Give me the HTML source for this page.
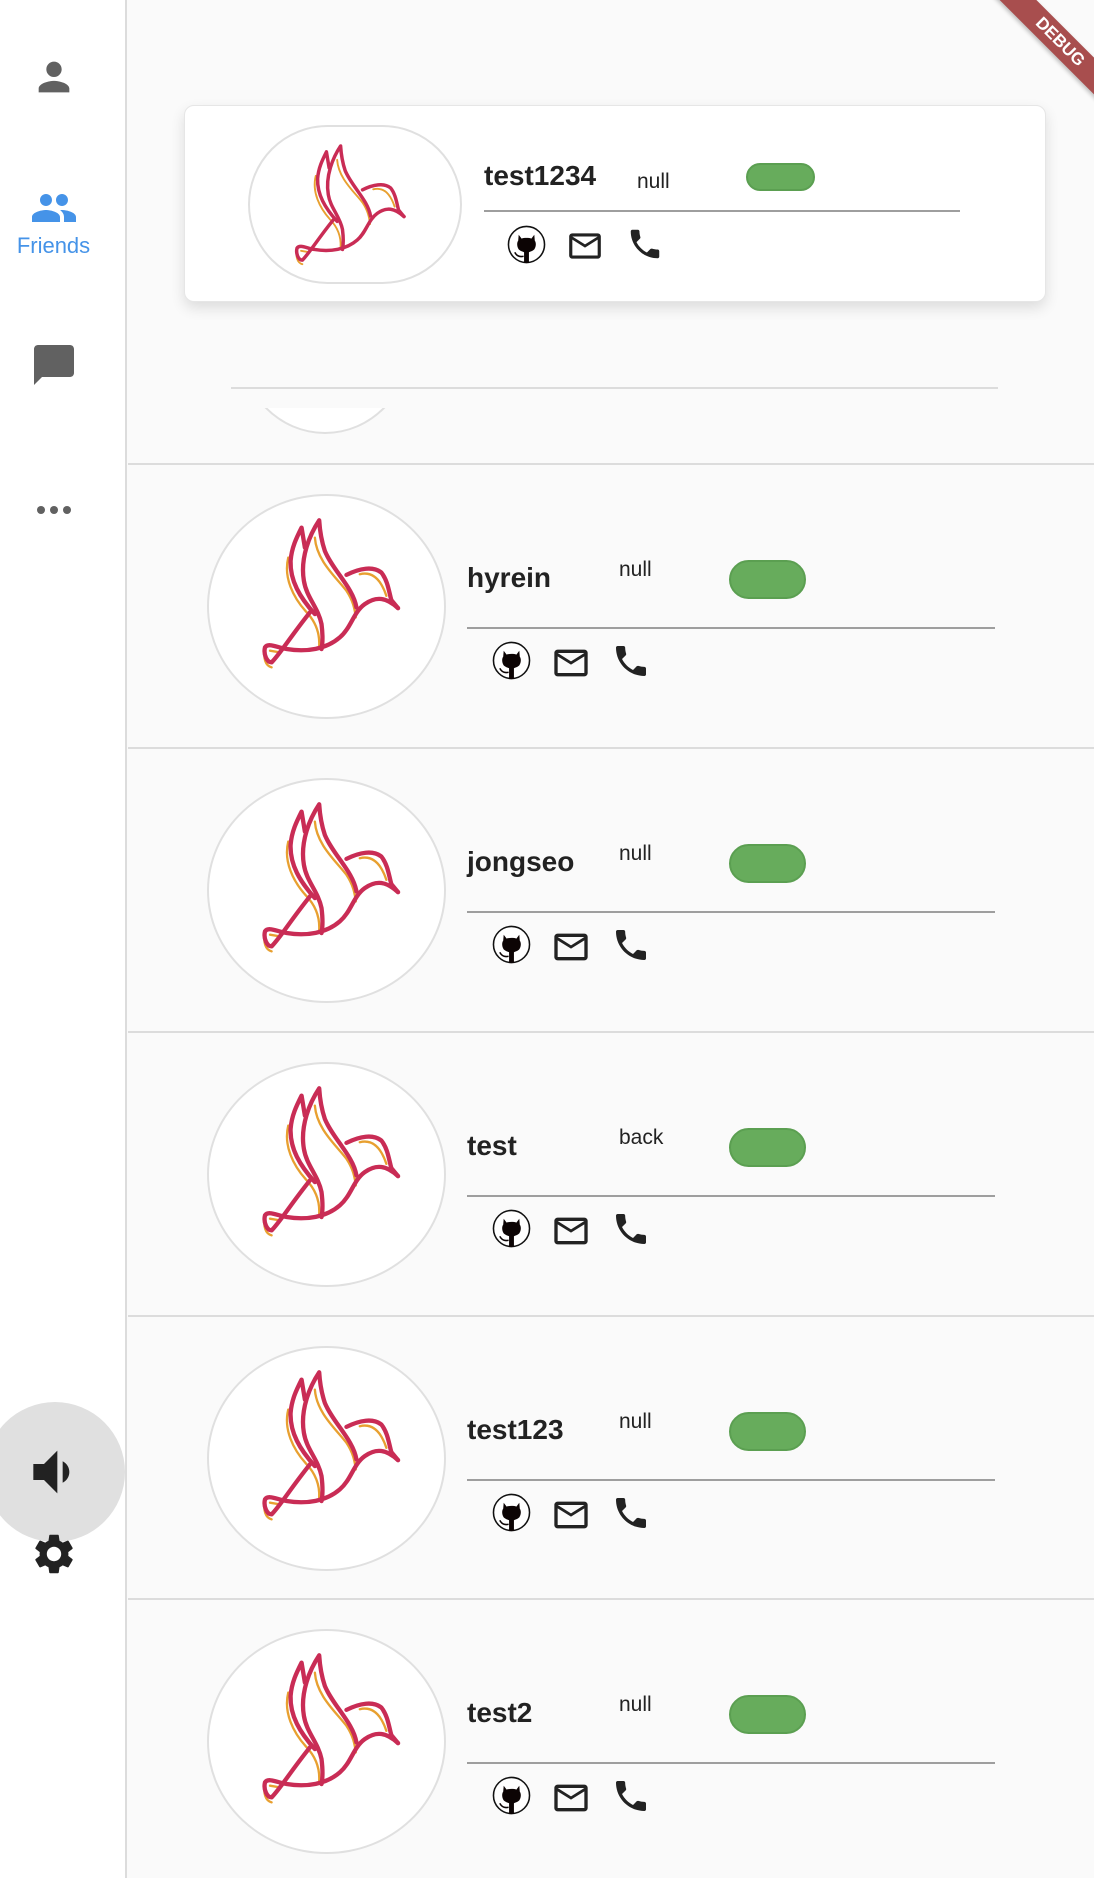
<!DOCTYPE html>
<html><head><meta charset="utf-8">
<style>
*{margin:0;padding:0;box-sizing:border-box}
html,body{width:1094px;height:1878px;overflow:hidden;background:#fafafa;font-family:"Liberation Sans",Roboto,sans-serif;position:relative}
.side{position:absolute;left:0;top:0;width:127px;height:1878px;background:#fff;border-right:2px solid #dcdcdc}
.ic{position:absolute}
.row{position:absolute;left:128px;width:966px;height:284px;border-top:2px solid #dcdcdc;background:#fafafa}
.av{position:absolute;left:79px;top:29px;width:239px;height:225px;border-radius:50%;background:#fff;border:2px solid #e0e0e0}
.name{position:absolute;left:339px;top:97px;font-size:28px;font-weight:bold;color:#222;letter-spacing:0}
.st{position:absolute;left:491px;top:93px;font-size:21px;color:#222}
.tg{position:absolute;left:601px;top:95px;width:77px;height:39px;border-radius:20px;background:#67ac5c;border:2px solid #5b9f51}
.ln{position:absolute;left:339px;top:162px;width:528px;height:2px;background:#9e9e9e}
.gh{position:absolute;left:364px;top:176px;width:39px;height:39px}
.ml{position:absolute;left:423px;top:178px;width:40px;height:40px}
.ph{position:absolute;left:483px;top:176px;width:40px;height:40px}
</style></head><body>
<svg width="0" height="0" style="position:absolute">
<defs>
<symbol id="bird" viewBox="180 100 430 470">
<g fill="none" stroke-linecap="round" stroke-linejoin="round">
<g stroke="#e8a030" stroke-width="7">
<path d="M265,230 C250,290 280,350 318,392 C345,420 360,455 358,495"/>
<path d="M345,170 C350,240 410,290 440,330 C460,360 465,385 468,410"/>
<path d="M480,280 C520,270 545,300 560,345"/>
<path d="M195,510 C190,530 195,555 215,560"/>
<path d="M210,510 L240,515"/>
</g>
<g stroke="#c92c55" stroke-width="13">
<path d="M595,382 C560,350 530,345 495,370 C460,395 455,440 420,470 C380,505 320,515 260,505 C230,500 205,485 195,500 C190,520 200,545 215,545 C240,520 270,470 330,395"/>
<path d="M470,380 C460,320 400,270 375,210 C365,180 360,150 358,118 C330,160 300,230 312,300 C320,350 355,380 365,430 C370,470 368,490 365,505"/>
<path d="M345,400 C300,350 270,300 272,240 C275,200 290,170 305,140 L315,200"/>
<path d="M440,282 C480,262 520,255 545,275 C565,300 568,335 575,358 L595,382"/>
</g></g>
</symbol>
<symbol id="gh" viewBox="0 0 40 40">
<circle cx="20" cy="20" r="18.5" fill="#fff" stroke="#111" stroke-width="1.6"/>
<path d="M12 10 L15 14 C17 13 23 13 25 14 L28 10 L28.5 16 C30 18 30 22 28 25 C26 27 23 27.5 22.5 28 L22.5 39 L17.5 39 L17.5 28 C17 27.5 14 27 12 25 C10 22 10 18 11.5 16 Z" fill="#0c0404"/>
<path d="M8 28 C10 32 13 33 17 32" fill="none" stroke="#0c0404" stroke-width="1.6"/>
</symbol>
<symbol id="ml" viewBox="0 0 24 24"><path fill="#222" d="M20 4H4c-1.1 0-1.99.9-1.99 2L2 18c0 1.1.9 2 2 2h16c1.1 0 2-.9 2-2V6c0-1.1-.9-2-2-2zm0 14H4V8l8 5 8-5v10zm-8-7L4 6h16l-8 5z"/></symbol>
<symbol id="ph" viewBox="0 0 24 24"><path fill="#222" d="M6.62 10.79c1.44 2.83 3.76 5.14 6.590 6.59l2.2-2.2c.27-.27.67-.36 1.02-.24 1.12.37 2.33.57 3.57.57.55 0 1 .45 1 1V20c0 .55-.45 1-1 1-9.39 0-17-7.610-17-17 0-.55.45-1 1-1h3.5c.55 0 1 .45 1 1 0 1.25.2 2.45.57 3.57.11.35.03.74-.25 1.02l-2.2 2.2z"/></symbol>
</defs></svg>

<div class="side">
<svg class="ic" style="left:31px;top:54px" width="46" height="46" viewBox="0 0 24 24"><path fill="#616161" d="M12 12c2.21 0 4-1.79 4-4s-1.79-4-4-4-4 1.79-4 4 1.79 4 4 4zm0 2c-2.670 0-8 1.34-8 4v2h16v-2c0-2.66-5.33-4-8-4z"/></svg>
<svg class="ic" style="left:30px;top:184px" width="48" height="48" viewBox="0 0 24 24"><path fill="#4593e8" d="M16 11c1.66 0 2.99-1.34 2.99-3S17.66 5 16 5c-1.66 0-3 1.34-3 3s1.34 3 3 3zm-8 0c1.66 0 2.99-1.34 2.99-3S9.66 5 8 5C6.34 5 5 6.34 5 8s1.34 3 3 3zm0 2c-2.33 0-7 1.17-7 3.5V19h14v-2.5c0-2.33-4.67-3.5-7-3.5zm8 0c-.29 0-.62.02-.97.05 1.16.84 1.970 1.970 1.970 3.45V19h6v-2.5c0-2.33-4.670-3.5-7-3.5z"/></svg>
<div style="position:absolute;left:0;width:107px;top:233px;text-align:center;font-size:22px;color:#4593e8">Friends</div>
<svg class="ic" style="left:30px;top:341px" width="48" height="48" viewBox="0 0 24 24"><path fill="#616161" d="M20 2H4c-1.1 0-2 .9-2 2v18l4-4h14c1.1 0 2-.9 2-2V4c0-1.1-.9-2-2-2z"/></svg>
<svg class="ic" style="left:36px;top:504px" width="36" height="12"><circle cx="5" cy="6" r="4" fill="#616161"/><circle cx="18" cy="6" r="4" fill="#616161"/><circle cx="31" cy="6" r="4" fill="#616161"/></svg>
<div style="position:absolute;left:-15px;top:1402px;width:140px;height:140px;border-radius:50%;background:#e0e0e0"></div>
<svg class="ic" style="left:20px;top:1440px" width="64" height="64" viewBox="0 0 24 24"><path fill="#222" d="M18.5 12c0-1.77-1.02-3.29-2.5-4.03v8.05c1.48-.73 2.5-2.25 2.5-4.02zM5 9v6h4l5 5V4L9 9H5z"/></svg>
<svg class="ic" style="left:30px;top:1530px" width="48" height="48" viewBox="0 0 24 24"><path fill="#222" d="M19.14 12.94c.04-.3.06-.61.06-.94 0-.32-.02-.64-.07-.94l2.03-1.58c.18-.14.23-.41.12-.61l-1.92-3.32c-.12-.22-.37-.29-.59-.22l-2.39.96c-.5-.38-1.03-.7-1.62-.94l-.36-2.54c-.04-.24-.24-.41-.48-.41h-3.840c-.24 0-.43.17-.47.41l-.36 2.54c-.59.24-1.13.57-1.62.94l-2.39-.96c-.22-.08-.47 0-.59.22L2.74 8.87c-.12.21-.08.47.12.61l2.03 1.58c-.05.3-.09.63-.09.94s.02.64.07.94l-2.03 1.58c-.18.14-.23.41-.12.61l1.92 3.32c.12.22.37.29.59.22l2.39-.96c.5.38 1.03.7 1.62.94l.36 2.54c.05.24.24.41.48.41h3.84c.24 0 .44-.17.47-.41l.36-2.54c.59-.24 1.13-.56 1.62-.94l2.39.96c.22.08.47 0 .59-.22l1.92-3.32c.12-.22.07-.47-.12-.61l-2.01-1.58zM12 15.6c-1.98 0-3.6-1.62-3.6-3.6s1.62-3.6 3.6-3.6 3.6 1.62 3.6 3.6-1.62 3.6-3.6 3.6z"/></svg>
</div>

<div style="position:absolute;left:231px;top:387px;width:767px;height:2px;background:#dcdcdc"></div>
<div style="position:absolute;left:240px;top:408px;width:170px;height:27px;overflow:hidden"><div style="position:absolute;left:0;top:-150px;width:170px;height:176px;border-radius:50%;background:#fff;border:2px solid #e0e0e0"></div></div>

<div style="position:absolute;left:184px;top:105px;width:862px;height:197px;background:#fff;border:1px solid #e6e6e6;border-radius:10px;box-shadow:0 6px 14px rgba(0,0,0,0.12)">
<div style="position:absolute;left:63px;top:19px;width:214px;height:159px;border-radius:80px;background:#fff;border:2px solid #e0e0e0"></div>
<svg style="position:absolute;left:108px;top:33px" width="115" height="130"><use href="#bird"/></svg>
<div style="position:absolute;left:299px;top:54px;font-size:28px;font-weight:bold;color:#222">test1234</div>
<div style="position:absolute;left:452px;top:64px;font-size:21px;color:#222">null</div>
<div style="position:absolute;left:561px;top:57px;width:69px;height:28px;border-radius:14px;background:#67ac5c;border:2px solid #5b9f51"></div>
<div style="position:absolute;left:299px;top:104px;width:476px;height:2px;background:#9e9e9e"></div>
<svg style="position:absolute;left:322px;top:119px" width="39" height="39"><use href="#gh"/></svg>
<svg style="position:absolute;left:381px;top:121px" width="38" height="38" viewBox="0 0 24 24"><use href="#ml"/></svg>
<svg style="position:absolute;left:441px;top:119px" width="38" height="38" viewBox="0 0 24 24"><use href="#ph"/></svg>
</div>

<div style="position:absolute;left:960px;top:29px;width:200px;height:26px;background:#a84e4e;transform:rotate(45deg);color:#fff;font-weight:bold;font-size:17px;text-align:center;line-height:26px;box-shadow:0 2px 4px rgba(0,0,0,0.25)">DEBUG</div>

<div class="row" style="top:463px"><div class="av"></div><svg style="position:absolute;left:132px;top:49px" width="143" height="157"><use href="#bird"/></svg><div class="name">hyrein</div><div class="st">null</div><div class="tg"></div><div class="ln"></div><svg class="gh"><use href="#gh"/></svg><svg class="ml" viewBox="0 0 24 24"><use href="#ml"/></svg><svg class="ph" viewBox="0 0 24 24"><use href="#ph"/></svg></div>
<div class="row" style="top:747px"><div class="av"></div><svg style="position:absolute;left:132px;top:49px" width="143" height="157"><use href="#bird"/></svg><div class="name">jongseo</div><div class="st">null</div><div class="tg"></div><div class="ln"></div><svg class="gh"><use href="#gh"/></svg><svg class="ml" viewBox="0 0 24 24"><use href="#ml"/></svg><svg class="ph" viewBox="0 0 24 24"><use href="#ph"/></svg></div>
<div class="row" style="top:1031px"><div class="av"></div><svg style="position:absolute;left:132px;top:49px" width="143" height="157"><use href="#bird"/></svg><div class="name">test</div><div class="st">back</div><div class="tg"></div><div class="ln"></div><svg class="gh"><use href="#gh"/></svg><svg class="ml" viewBox="0 0 24 24"><use href="#ml"/></svg><svg class="ph" viewBox="0 0 24 24"><use href="#ph"/></svg></div>
<div class="row" style="top:1315px"><div class="av"></div><svg style="position:absolute;left:132px;top:49px" width="143" height="157"><use href="#bird"/></svg><div class="name">test123</div><div class="st">null</div><div class="tg"></div><div class="ln"></div><svg class="gh"><use href="#gh"/></svg><svg class="ml" viewBox="0 0 24 24"><use href="#ml"/></svg><svg class="ph" viewBox="0 0 24 24"><use href="#ph"/></svg></div>
<div class="row" style="top:1598px"><div class="av"></div><svg style="position:absolute;left:132px;top:49px" width="143" height="157"><use href="#bird"/></svg><div class="name">test2</div><div class="st">null</div><div class="tg"></div><div class="ln"></div><svg class="gh"><use href="#gh"/></svg><svg class="ml" viewBox="0 0 24 24"><use href="#ml"/></svg><svg class="ph" viewBox="0 0 24 24"><use href="#ph"/></svg></div>
</body></html>
